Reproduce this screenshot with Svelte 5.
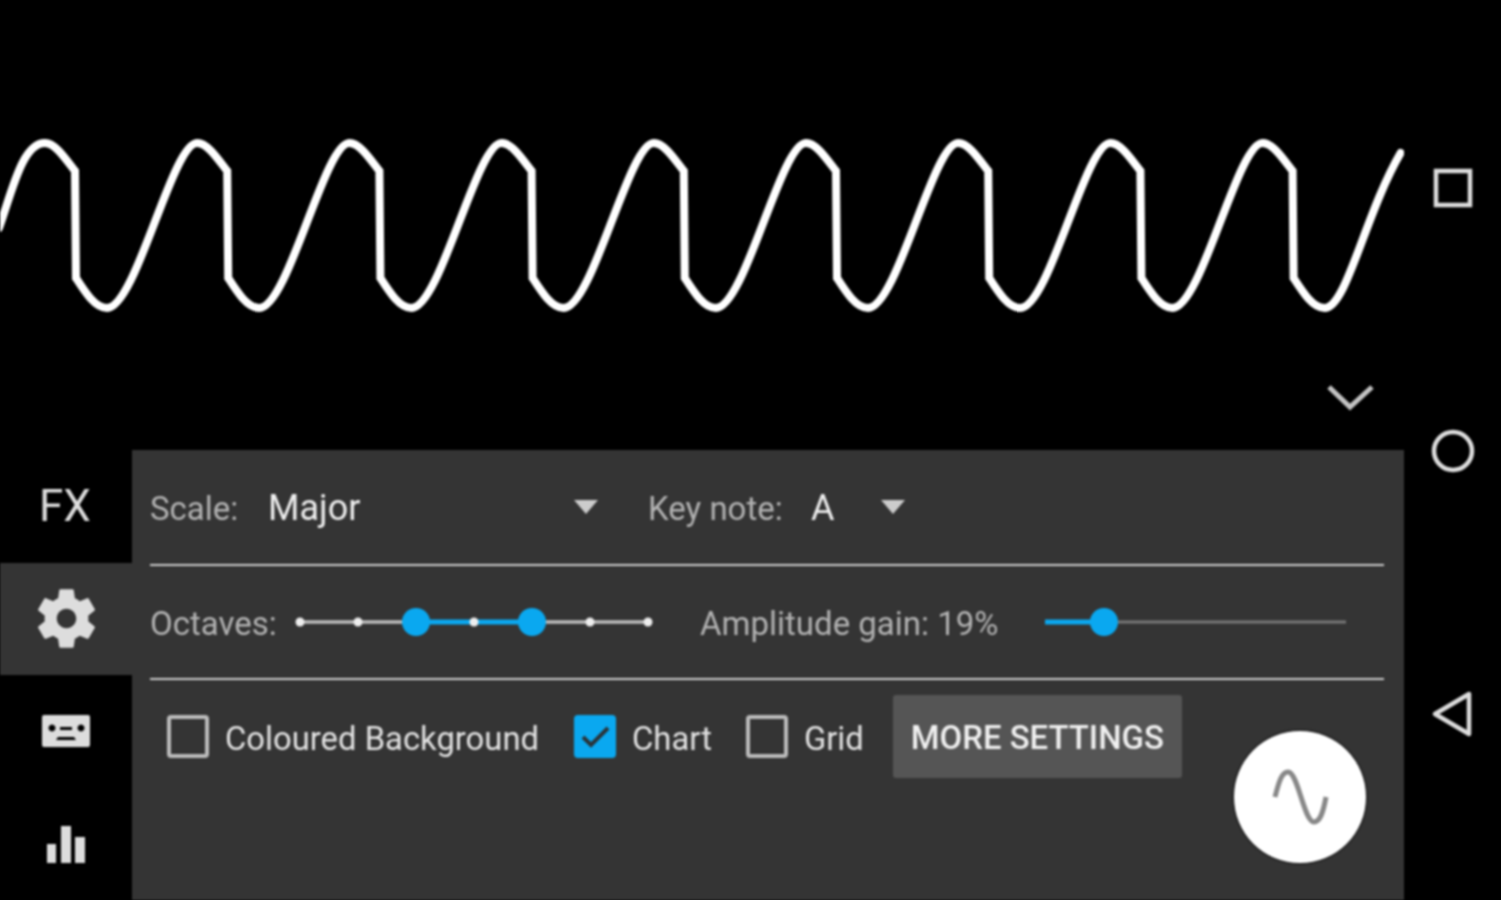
<script>
    const period = 152.2;
    const peaks = 9;

    // one cycle of the clipped sine, peak to peak
    function cycle(x) {
        const f = (dx, y) => `${(x + dx).toFixed(1)},${y}`;
        return `C${f(10, 143)} ${f(20, 158)} ${f(30, 171)} L${f(31, 278)} C${f(40, 292)} ${f(50, 308)} ${f(62, 308)} `;
    }
    function rise(x) {
        const f = (dx, y) => `${(x + dx).toFixed(1)},${y}`;
        return `C${f(91, 308)} ${f(127, 143)} ${f(period, 143)} `;
    }

    function wave() {
        let d = 'M-1,228 C12,192 22,143 45,143 ';
        for (let i = 0; i < peaks; i++) {
            const x = 45 + i * period;
            d += cycle(x);
            if (i < peaks - 1) d += rise(x);
        }
        const end = 45 + (peaks - 1) * period + 62;
        d += `C${end + 22},308 ${end + 40},215 ${end + 76},153`;
        return d;
    }

    const ticks = [300, 358, 416, 474, 532, 590, 648];
</script>

<div class="screen">
    <div class="main">
        <div class="display">
            <svg class="wave" width="1404" height="450" viewBox="0 0 1404 450">
                <path d={wave()} fill="none" stroke="#fff" stroke-width="8" stroke-linecap="round" />
            </svg>
            <svg class="chevron" width="50" height="30" viewBox="0 0 50 30">
                <path d="M4,4 L25,24 L47,4" fill="none" stroke="#c4c4c4" stroke-width="5" />
            </svg>
        </div>
        <div class="bottom">
            <div class="side">
                <div class="tab fx"><span>FX</span></div>
                <div class="tab active">
                    <svg width="73" height="73" viewBox="0 0 24 24">
                        <path fill="#ddd" fill-rule="evenodd" d="M19.14 12.94c.04-.3.06-.61.06-.94 0-.32-.02-.64-.07-.94l2.03-1.58a.49.49 0 0 0 .12-.61l-1.92-3.32a.488.488 0 0 0-.59-.22l-2.39.96c-.5-.38-1.03-.7-1.62-.94l-.36-2.54a.484.484 0 0 0-.48-.41h-3.84c-.24 0-.43.17-.47.41l-.36 2.54c-.59.24-1.13.57-1.62.94l-2.39-.96c-.22-.08-.47 0-.59.22L2.74 8.87c-.12.21-.08.47.12.61l2.03 1.58c-.05.3-.09.63-.09.94s.02.64.07.94l-2.03 1.58a.49.49 0 0 0-.12.61l1.92 3.32c.12.22.37.29.59.22l2.39-.96c.5.38 1.03.7 1.62.94l.36 2.54c.05.24.24.41.48.41h3.84c.24 0 .44-.17.47-.41l.36-2.54c.59-.24 1.13-.56 1.62-.94l2.39.96c.22.08.47 0 .59-.22l1.92-3.32c.12-.22.07-.47-.12-.61l-2.01-1.58zM12 15.2c-1.76 0-3.2-1.44-3.2-3.2s1.44-3.2 3.2-3.2 3.2 1.44 3.2 3.2-1.44 3.2-3.2 3.2z" />
                    </svg>
                </div>
                <div class="tab">
                    <svg width="50" height="34" viewBox="0 0 50 34">
                        <path fill="#ddd" fill-rule="evenodd" d="M3,1 H47 a2,2 0 0 1 2,2 V31 a2,2 0 0 1 -2,2 H3 a2,2 0 0 1 -2,-2 V3 a2,2 0 0 1 2,-2 Z M11,10.5 a3.5,3.5 0 1 0 0.01,0 Z M40,10.5 a3.5,3.5 0 1 0 0.01,0 Z M19,13 V16 H31 V13 Z M17,23 L15,26 H35 L33,23 Z" />
                    </svg>
                </div>
                <div class="tab">
                    <svg width="40" height="40" viewBox="0 0 40 40">
                        <path fill="#ddd" d="M1,20 h9 v19 h-9 Z M15,2 h10 v37 h-10 Z M29,13 h10 v26 h-10 Z" />
                    </svg>
                </div>
            </div>

            <div class="panel">
                <div class="row first">
                    <span class="label scale-label">Scale:</span>
                    <div class="select major">
                        <span class="value">Major</span>
                        <span class="caret"></span>
                    </div>
                    <span class="label key-label">Key note:</span>
                    <div class="select key">
                        <span class="value">A</span>
                        <span class="caret"></span>
                    </div>
                </div>
                <div class="row second">
                    <span class="label octaves">Octaves:</span>
                    <svg class="octave-slider" width="360" height="32" viewBox="295 606 360 32">
                        <line x1="300" y1="622" x2="648" y2="622" stroke="#bbb" stroke-width="3.5" />
                        <line x1="416" y1="622" x2="532" y2="622" stroke="#0aa8f0" stroke-width="5" />
                        {#each ticks as t}
                            <circle cx={t} cy="622" r="4.5" fill="#eee" />
                        {/each}
                        <circle cx="416" cy="622" r="14" fill="#0aa8f0" />
                        <circle cx="532" cy="622" r="14" fill="#0aa8f0" />
                    </svg>
                    <span class="label amp">Amplitude gain: 19%</span>
                    <svg class="amp-slider" width="310" height="32" viewBox="1040 606 310 32">
                        <line x1="1045" y1="622" x2="1346" y2="622" stroke="#777" stroke-width="3" />
                        <line x1="1045" y1="622" x2="1104" y2="622" stroke="#0aa8f0" stroke-width="5" />
                        <circle cx="1104" cy="622" r="14" fill="#0aa8f0" />
                    </svg>
                </div>
                <div class="row third">
                    <span class="box"></span>
                    <span class="check-label bg">Coloured Background</span>
                    <span class="box checked">
                        <svg width="38" height="38" viewBox="0 0 38 38">
                            <path d="M7,19 L15,27 L32,10" fill="none" stroke="#2a3338" stroke-width="4" />
                        </svg>
                    </span>
                    <span class="check-label chart">Chart</span>
                    <span class="box"></span>
                    <span class="check-label grid">Grid</span>
                    <button class="more">MORE SETTINGS</button>
                </div>
                <div class="fab">
                    <svg width="132" height="132" viewBox="0 0 132 132">
                        <path d="M41,66 C45,50 48,41 54,41 C64,41 70,91 80,91 C86,91 89,82 92,66" fill="none" stroke="#888" stroke-width="5" />
                    </svg>
                </div>
            </div>
        </div>
    </div>

    <div class="nav">
        <div class="nav-item">
            <svg width="44" height="44" viewBox="0 0 44 44">
                <rect x="5" y="5" width="34" height="34" fill="none" stroke="#ddd" stroke-width="4.5" />
            </svg>
        </div>
        <div class="nav-item">
            <svg width="44" height="44" viewBox="0 0 44 44">
                <circle cx="22" cy="22" r="19" fill="none" stroke="#ddd" stroke-width="4.5" />
            </svg>
        </div>
        <div class="nav-item">
            <svg width="44" height="50" viewBox="0 0 44 50">
                <path d="M4,25 L38,5 V45 Z" fill="none" stroke="#ddd" stroke-width="4.5" stroke-linejoin="round" />
            </svg>
        </div>
    </div>
</div>

<style>
    :global(body) {
        margin: 0;
        background: #000;
    }
    .screen {
        display: flex;
        width: 1501px;
        height: 900px;
        overflow: hidden;
        background: #000;
        font-family: Roboto, "Liberation Sans", sans-serif;
        filter: blur(0.8px);
    }
    .main {
        width: 1404px;
        display: flex;
        flex-direction: column;
    }
    .display {
        position: relative;
        height: 450px;
    }
    .wave {
        display: block;
    }
    .chevron {
        position: absolute;
        left: 1325px;
        top: 383px;
    }
    .bottom {
        display: flex;
        height: 450px;
    }
    .side {
        width: 132px;
        display: flex;
        flex-direction: column;
    }
    .tab {
        height: 112.5px;
        display: flex;
        align-items: center;
        justify-content: center;
    }
    .tab.active {
        background: #343434;
    }
    .fx {
        color: #ddd;
        font-size: 44px;
    }
    .fx span {
        margin-right: 2px;
    }
    .panel {
        position: relative;
        flex: 1;
        background: #343434;
        padding: 0 20px 0 18px;
    }
    .row {
        display: flex;
        align-items: center;
        border-bottom: 2px solid #ccc;
    }
    .first {
        height: 114px;
    }
    .second {
        height: 112px;
    }
    .third {
        border-bottom: none;
        align-items: flex-start;
        padding: 15px 0 0 17px;
    }
    .label {
        color: #b2b2b2;
        font-size: 33px;
        padding-top: 2px;
    }
    .scale-label {
        width: 118px;
    }
    .select {
        display: flex;
        align-items: center;
        justify-content: space-between;
    }
    .major {
        width: 330px;
    }
    .key {
        width: 94px;
    }
    .value {
        color: #eee;
        font-size: 36px;
        padding-top: 2px;
    }
    .caret {
        width: 0;
        height: 0;
        border-left: 12px solid transparent;
        border-right: 12px solid transparent;
        border-top: 14px solid #ccc;
    }
    .key-label {
        width: 163px;
        margin-left: 50px;
    }
    .octaves {
        width: 145px;
    }
    .octave-slider {
        flex: none;
    }
    .amp {
        width: 340px;
        margin-left: 45px;
    }
    .box {
        flex: none;
        box-sizing: border-box;
        width: 42px;
        height: 43px;
        margin-top: 20px;
        border: 4px solid #bbb;
        border-radius: 4px;
    }
    .box.checked {
        border: none;
        background: #0aa8f0;
        display: flex;
        align-items: center;
        justify-content: center;
    }
    .check-label {
        color: #e2e2e2;
        font-size: 32.8px;
        line-height: 88px;
        margin-left: 16px;
    }
    .bg {
        margin-right: 35px;
    }
    .chart {
        margin-right: 34px;
    }
    .grid {
        margin-right: 29px;
    }
    .more {
        width: 289px;
        height: 83px;
        padding: 2px 0 0;
        border: none;
        border-radius: 3px;
        background: #555;
        color: #f0f0f0;
        font-family: inherit;
        font-size: 32.9px;
        font-weight: 500;
    }
    .fab {
        position: absolute;
        left: 1102px;
        top: 281px;
        width: 132px;
        height: 132px;
        border-radius: 50%;
        background: #fff;
        box-shadow: 0 0 3px #000;
    }
    .nav {
        width: 97px;
        padding-top: 56px;
        display: flex;
        flex-direction: column;
    }
    .nav-item {
        height: 263px;
        display: flex;
        align-items: center;
        justify-content: center;
    }
</style>
